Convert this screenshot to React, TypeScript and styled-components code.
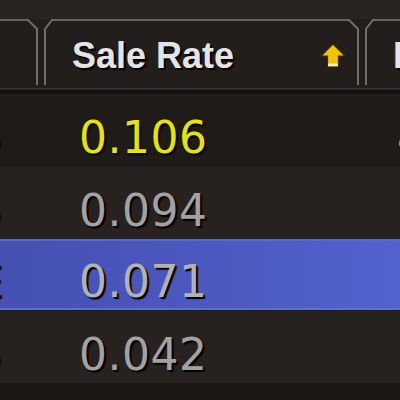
import React from 'react';
import styled, { createGlobalStyle } from 'styled-components';

const Global = createGlobalStyle`
  html, body {
    margin: 0;
    padding: 0;
    background: #1b1715;
  }
  #root {
    width: 400px;
    height: 400px;
    overflow: hidden;
  }
`;

const Frame = styled.div`
  width: 400px;
  height: 400px;
  background: #1b1715;
  display: flex;
  flex-direction: column;
  overflow: hidden;
`;

const TopBand = styled.div`
  height: 19px;
  background: #2a2421;
  flex-shrink: 0;
`;

const HeaderRow = styled.div`
  display: flex;
  height: 69px;
  background: #221e1c;
  flex-shrink: 0;
`;

const HeaderCell = styled.div<{ $w: number; $pad?: number }>`
  width: ${(p) => p.$w}px;
  flex-shrink: 0;
  border-top: 2px solid #66625f;
  box-sizing: border-box;
  display: flex;
  align-items: center;
  padding-left: ${(p) => p.$pad ?? 0}px;
  padding-right: 2px;
  padding-top: 3px;
  overflow: hidden;
  gap: 8px;
`;

const HeaderLabel = styled.span`
  font-family: 'Liberation Sans', Arial, sans-serif;
  font-weight: 700;
  font-size: 36px;
  color: #e6e4e2;
  text-shadow: 2px 2px 1px #000;
  white-space: nowrap;
  flex: 1;
`;

const HeaderRule = styled.div`
  height: 5px;
  flex-shrink: 0;
  background: linear-gradient(#3a3533 0, #3a3533 1px, #121010 2px, #121010 100%);
`;

const Row = styled.div<{ $bg: string; $selected?: boolean }>`
  display: flex;
  height: ${(p) => (p.$selected ? 71 : 73)}px;
  flex-shrink: 0;
  background: ${(p) => p.$bg};
  box-sizing: border-box;
  border-top: ${(p) => (p.$selected ? '2px solid #5a68d6' : '1px solid rgba(0,0,0,0.15)')};
  border-bottom: ${(p) => (p.$selected ? '2px solid #5e6ce0' : 'none')};
`;

const Cell = styled.div<{ $w: number; $pad?: number; $end?: boolean }>`
  width: ${(p) => p.$w}px;
  flex-shrink: 0;
  display: flex;
  align-items: center;
  justify-content: ${(p) => (p.$end ? 'flex-end' : 'flex-start')};
  padding-left: ${(p) => p.$pad ?? 0}px;
  padding-top: 14px;
  box-sizing: border-box;
  overflow: hidden;
`;

const Value = styled.span<{ $color: string }>`
  font-family: 'DejaVu Sans', sans-serif;
  font-size: 44px;
  letter-spacing: 0.5px;
  color: ${(p) => p.$color};
  text-shadow: 2px 2px 1px #000;
  white-space: nowrap;
  flex-shrink: 0;
`;

const Bottom = styled.div`
  flex: 1;
  background: #1b1715;
`;

function Divider() {
  return (
    <svg width="26" height="69" viewBox="0 0 26 69" style={{ flexShrink: 0, display: 'block' }}>
      <rect width="26" height="69" fill="#221e1c" />
      <path d="M0 1 H1 L10 10 V66" stroke="#716d6a" strokeWidth="2" fill="none" />
      <path d="M26 1 H25 L18 10 V66" stroke="#716d6a" strokeWidth="2" fill="none" />
    </svg>
  );
}

function SortArrow() {
  return (
    <svg width="26" height="26" viewBox="0 0 24 24" style={{ flexShrink: 0 }}>
      <path d="M12 1 L23 12 H17 V22 H7 V12 H1 Z" fill="#f2c500" stroke="#3a2a00" strokeWidth="1" />
      <rect x="7.5" y="19" width="9" height="2.5" fill="#fff3b0" />
    </svg>
  );
}

const rows = [
  { left: '5', value: '0.106', right: '4', color: '#e8e400', bg: '#1f1b19' },
  { left: '5', value: '0.094', right: '1', color: '#a4a2a0', bg: '#272220' },
  { left: 'E', value: '0.071', right: '1', color: '#b4b2b0', bg: 'linear-gradient(90deg, #4550b2, #4d5ac2 60%, #5362d0)', selected: true },
  { left: '5', value: '0.042', right: '1', color: '#a4a2a0', bg: '#27221f' },
];

export default function App() {
  return (
    <>
      <Global />
      <Frame>
        <TopBand />
        <HeaderRow>
          <HeaderCell $w={27} />
          <Divider />
          <HeaderCell $w={295} $pad={19}>
            <HeaderLabel>Sale Rate</HeaderLabel>
            <SortArrow />
          </HeaderCell>
          <Divider />
          <HeaderCell $w={26} $pad={19}>
            <HeaderLabel>Buyout</HeaderLabel>
          </HeaderCell>
        </HeaderRow>
        <HeaderRule />
        {rows.map((r, i) => (
          <Row key={i} $bg={r.bg} $selected={r.selected}>
            <Cell $w={53} $end style={{ paddingRight: 50 }}>
              <Value $color="#a4a2a0">{r.left}</Value>
            </Cell>
            <Cell $w={321} $pad={26}>
              <Value $color={r.color}>{r.value}</Value>
            </Cell>
            <Cell $w={26} $pad={23}>
              <Value $color="#a4a2a0">{r.right}</Value>
            </Cell>
          </Row>
        ))}
        <Bottom />
      </Frame>
    </>
  );
}
